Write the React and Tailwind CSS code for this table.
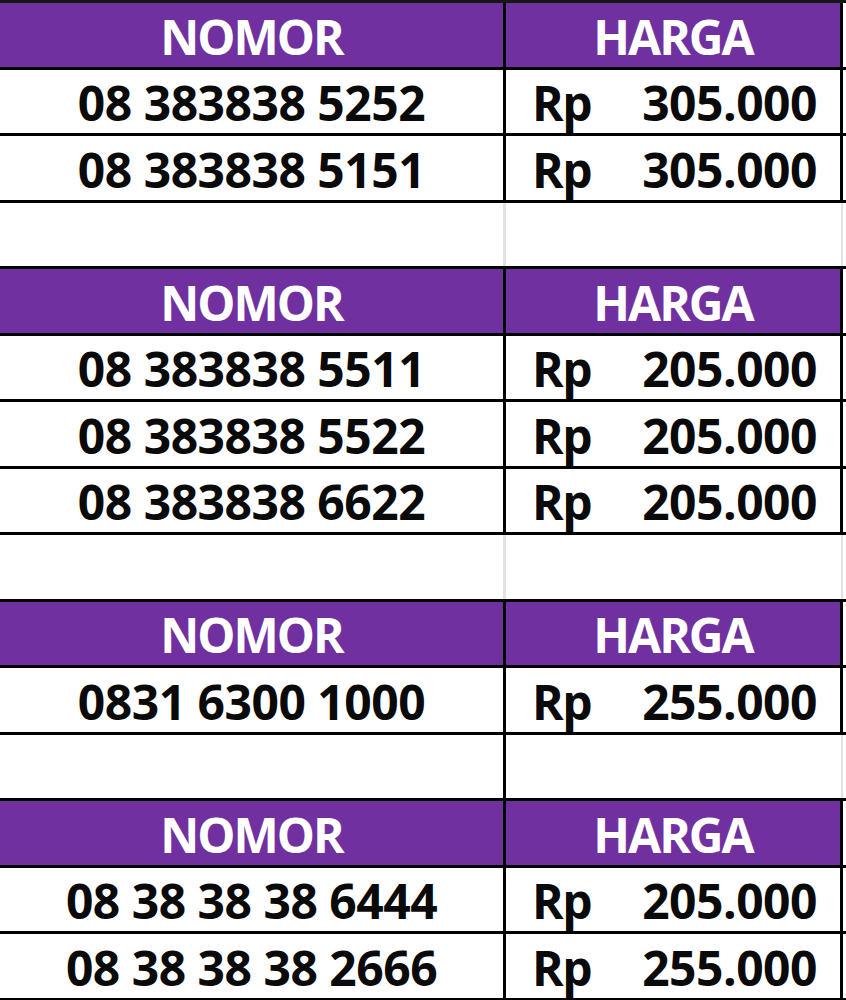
import React from "react";

const font = { fontFamily: '"Open Sans", "Noto Sans", sans-serif' };

function Header() {
  return (
    <div className="flex h-[66.5px] border-b-[3px] border-black">
      <div className="w-[506px] bg-[#7030a0] border-r-[3px] border-black flex items-center justify-center pt-[4px] text-white tracking-[-2px]">
        NOMOR
      </div>
      <div className="w-[337px] bg-[#7030a0] border-r-[3px] border-black flex items-center justify-center pt-[4px] text-white tracking-[-2px]">
        HARGA
      </div>
    </div>
  );
}

function Row({ num, price }) {
  return (
    <div className="flex h-[66.5px] border-b-[3px] border-black bg-white">
      <div className="w-[506px] border-r-[3px] border-black flex items-center justify-center pt-[4px] text-[#0a0a0a]">
        {num}
      </div>
      <div className="w-[337px] border-r-[3px] border-black flex items-center justify-between pl-[26px] pr-[23px] pt-[4px] text-[#0a0a0a]">
        <span className="tracking-[-1.5px]">Rp</span>
        <span>{price}</span>
      </div>
    </div>
  );
}

function Blank({ dark }) {
  return (
    <div className="flex h-[66.5px] border-b-[3px] border-black bg-white">
      <div
        className={
          dark
            ? "w-[506px] border-r-[3px] border-black"
            : "w-[506px] border-r-[3px] border-[#e2e2e2]"
        }
      />
      <div className="w-[337px] border-r-[2px] border-[#e2e2e2]" />
    </div>
  );
}

export default function App() {
  return (
    <div
      className="w-[846px] h-[1000px] overflow-hidden bg-white font-bold text-[48px] leading-none tracking-[-0.5px]"
      style={font}
    >
      <div className="h-[3px] bg-[#161616]" />
      <Header />
      <Row num="08 383838 5252" price="305.000" />
      <Row num="08 383838 5151" price="305.000" />
      <Blank />
      <Header />
      <Row num="08 383838 5511" price="205.000" />
      <Row num="08 383838 5522" price="205.000" />
      <Row num="08 383838 6622" price="205.000" />
      <Blank />
      <Header />
      <Row num="0831 6300 1000" price="255.000" />
      <Blank dark />
      <Header />
      <Row num="08 38 38 38 6444" price="205.000" />
      <Row num="08 38 38 38 2666" price="255.000" />
    </div>
  );
}
